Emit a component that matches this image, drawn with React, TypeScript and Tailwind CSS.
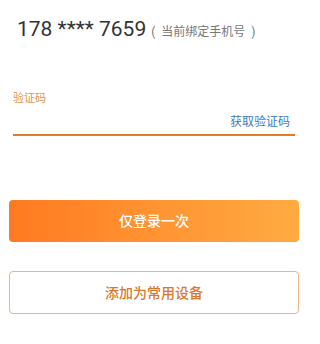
export default function App() {
  return (
    <div className="w-[308px] h-[344px] bg-white font-['Roboto','Noto_Sans_CJK_SC',sans-serif]">
      {/* bound phone number */}
      <div className="flex items-baseline pt-[16px] pl-[17px]">
        <span className="text-[21px] leading-[27px] text-[#333333]">178 **** 7659</span>
        <span className="ml-[5px] text-[12px] text-[#777777]">(</span>
        <span className="ml-[6px] text-[12px] text-[#777777]">当前绑定手机号</span>
        <span className="ml-[6px] text-[12px] text-[#777777]">)</span>
      </div>

      {/* verification code field */}
      <div className="mt-[49px] ml-[13px] w-[282px]">
        <div className="text-[11px] leading-[14px] text-[#e0944a]">验证码</div>
        <div className="mt-[9px] flex justify-end pb-[5px] pr-[5px] border-b-2 border-[#e07b2c]">
          <span className="text-[12px] leading-[14px] text-[#3d7cc0]">获取验证码</span>
        </div>
      </div>

      {/* actions */}
      <div className="px-[9px] mt-[64px] flex flex-col">
        <button className="h-[42px] w-full rounded-[4px] bg-gradient-to-r from-[#ff7a1f] to-[#ffab42] text-[14px] font-medium text-white">
          仅登录一次
        </button>
        <button className="mt-[29px] h-[43px] w-full rounded-[4px] border border-[#eab487] bg-white pt-[2px] text-[14px] font-medium text-[#d8782f]">
          添加为常用设备
        </button>
      </div>
    </div>
  );
}
